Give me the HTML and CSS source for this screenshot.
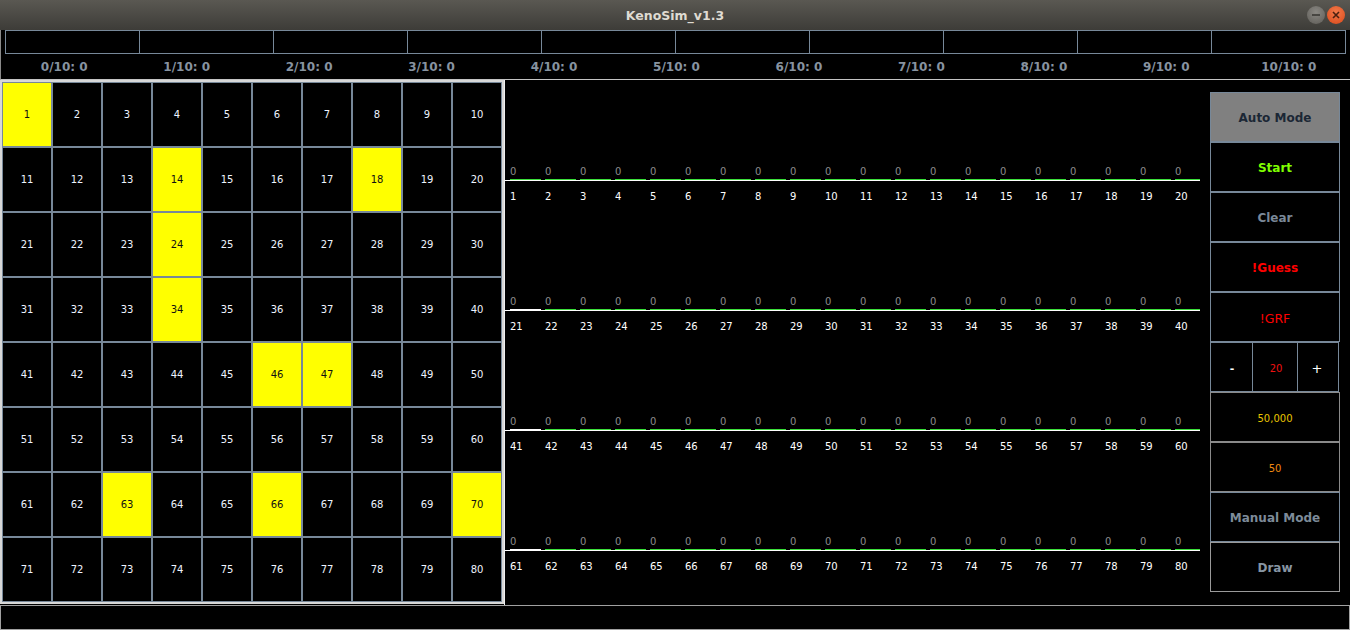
FILE: index.html
```html
<!DOCTYPE html>
<html lang="en">
<head>
<meta charset="utf-8">
<title>KenoSim_v1.3</title>
<link rel="stylesheet" href="styles.css">
</head>
<body>
<div class="window">
  <header class="titlebar">
    <div></div>
    <div class="title">KenoSim_v1.3</div>
    <div class="winbtns">
      <span class="wb wb-min"><svg width="18" height="18" viewBox="0 0 18 18"><line x1="5" y1="9" x2="13" y2="9" stroke="#3a3935" stroke-width="1.6"/></svg></span>
      <span class="wb wb-close"><svg width="18" height="18" viewBox="0 0 18 18"><path d="M6 6 L12 12 M12 6 L6 12" stroke="#4a2010" stroke-width="1.6"/></svg></span>
    </div>
  </header>

  <section class="top">
    <div class="boxes">
      <div class="box"></div><div class="box"></div><div class="box"></div><div class="box"></div><div class="box"></div>
      <div class="box"></div><div class="box"></div><div class="box"></div><div class="box"></div><div class="box"></div>
    </div>
    <div class="labels">
      <span>0/10: 0</span><span>1/10: 0</span><span>2/10: 0</span><span>3/10: 0</span><span>4/10: 0</span><span>5/10: 0</span>
      <span>6/10: 0</span><span>7/10: 0</span><span>8/10: 0</span><span>9/10: 0</span><span>10/10: 0</span>
    </div>
  </section>

  <main class="main">
    <div class="board">
      <div class="cell on">1</div><div class="cell">2</div><div class="cell">3</div><div class="cell">4</div><div class="cell">5</div><div class="cell">6</div><div class="cell">7</div><div class="cell">8</div><div class="cell">9</div><div class="cell">10</div>
      <div class="cell">11</div><div class="cell">12</div><div class="cell">13</div><div class="cell on">14</div><div class="cell">15</div><div class="cell">16</div><div class="cell">17</div><div class="cell on">18</div><div class="cell">19</div><div class="cell">20</div>
      <div class="cell">21</div><div class="cell">22</div><div class="cell">23</div><div class="cell on">24</div><div class="cell">25</div><div class="cell">26</div><div class="cell">27</div><div class="cell">28</div><div class="cell">29</div><div class="cell">30</div>
      <div class="cell">31</div><div class="cell">32</div><div class="cell">33</div><div class="cell on">34</div><div class="cell">35</div><div class="cell">36</div><div class="cell">37</div><div class="cell">38</div><div class="cell">39</div><div class="cell">40</div>
      <div class="cell">41</div><div class="cell">42</div><div class="cell">43</div><div class="cell">44</div><div class="cell">45</div><div class="cell on">46</div><div class="cell on">47</div><div class="cell">48</div><div class="cell">49</div><div class="cell">50</div>
      <div class="cell">51</div><div class="cell">52</div><div class="cell">53</div><div class="cell">54</div><div class="cell">55</div><div class="cell">56</div><div class="cell">57</div><div class="cell">58</div><div class="cell">59</div><div class="cell">60</div>
      <div class="cell">61</div><div class="cell">62</div><div class="cell on">63</div><div class="cell">64</div><div class="cell">65</div><div class="cell on">66</div><div class="cell">67</div><div class="cell">68</div><div class="cell">69</div><div class="cell on">70</div>
      <div class="cell">71</div><div class="cell">72</div><div class="cell">73</div><div class="cell">74</div><div class="cell">75</div><div class="cell">76</div><div class="cell">77</div><div class="cell">78</div><div class="cell">79</div><div class="cell">80</div>
    </div>

    <div class="hist">
      <div class="hrow r1">
        <div class="hplot">
          <div class="hcol"><span class="hval">0</span><span class="bar"></span></div><div class="hcol"><span class="hval">0</span><span class="bar"></span></div><div class="hcol"><span class="hval">0</span><span class="bar"></span></div><div class="hcol"><span class="hval">0</span><span class="bar"></span></div><div class="hcol"><span class="hval">0</span><span class="bar"></span></div>
          <div class="hcol"><span class="hval">0</span><span class="bar"></span></div><div class="hcol"><span class="hval">0</span><span class="bar"></span></div><div class="hcol"><span class="hval">0</span><span class="bar"></span></div><div class="hcol"><span class="hval">0</span><span class="bar"></span></div><div class="hcol"><span class="hval">0</span><span class="bar"></span></div>
          <div class="hcol"><span class="hval">0</span><span class="bar"></span></div><div class="hcol"><span class="hval">0</span><span class="bar"></span></div><div class="hcol"><span class="hval">0</span><span class="bar"></span></div><div class="hcol"><span class="hval">0</span><span class="bar"></span></div><div class="hcol"><span class="hval">0</span><span class="bar"></span></div>
          <div class="hcol"><span class="hval">0</span><span class="bar"></span></div><div class="hcol"><span class="hval">0</span><span class="bar"></span></div><div class="hcol"><span class="hval">0</span><span class="bar"></span></div><div class="hcol"><span class="hval">0</span><span class="bar"></span></div><div class="hcol"><span class="hval">0</span><span class="bar"></span></div>
        </div>
        <div class="hnums"><span>1</span><span>2</span><span>3</span><span>4</span><span>5</span><span>6</span><span>7</span><span>8</span><span>9</span><span>10</span><span>11</span><span>12</span><span>13</span><span>14</span><span>15</span><span>16</span><span>17</span><span>18</span><span>19</span><span>20</span></div>
      </div>
      <div class="hrow r2">
        <div class="hplot">
          <div class="hcol"><span class="hval">0</span><span class="bar white"></span></div><div class="hcol"><span class="hval">0</span><span class="bar"></span></div><div class="hcol"><span class="hval">0</span><span class="bar"></span></div><div class="hcol"><span class="hval">0</span><span class="bar"></span></div><div class="hcol"><span class="hval">0</span><span class="bar"></span></div>
          <div class="hcol"><span class="hval">0</span><span class="bar"></span></div><div class="hcol"><span class="hval">0</span><span class="bar"></span></div><div class="hcol"><span class="hval">0</span><span class="bar"></span></div><div class="hcol"><span class="hval">0</span><span class="bar"></span></div><div class="hcol"><span class="hval">0</span><span class="bar"></span></div>
          <div class="hcol"><span class="hval">0</span><span class="bar"></span></div><div class="hcol"><span class="hval">0</span><span class="bar"></span></div><div class="hcol"><span class="hval">0</span><span class="bar"></span></div><div class="hcol"><span class="hval">0</span><span class="bar"></span></div><div class="hcol"><span class="hval">0</span><span class="bar"></span></div>
          <div class="hcol"><span class="hval">0</span><span class="bar"></span></div><div class="hcol"><span class="hval">0</span><span class="bar"></span></div><div class="hcol"><span class="hval">0</span><span class="bar"></span></div><div class="hcol"><span class="hval">0</span><span class="bar"></span></div><div class="hcol"><span class="hval">0</span><span class="bar"></span></div>
        </div>
        <div class="hnums"><span>21</span><span>22</span><span>23</span><span>24</span><span>25</span><span>26</span><span>27</span><span>28</span><span>29</span><span>30</span><span>31</span><span>32</span><span>33</span><span>34</span><span>35</span><span>36</span><span>37</span><span>38</span><span>39</span><span>40</span></div>
      </div>
      <div class="hrow r3">
        <div class="hplot">
          <div class="hcol"><span class="hval">0</span><span class="bar white"></span></div><div class="hcol"><span class="hval">0</span><span class="bar"></span></div><div class="hcol"><span class="hval">0</span><span class="bar"></span></div><div class="hcol"><span class="hval">0</span><span class="bar"></span></div><div class="hcol"><span class="hval">0</span><span class="bar"></span></div>
          <div class="hcol"><span class="hval">0</span><span class="bar"></span></div><div class="hcol"><span class="hval">0</span><span class="bar"></span></div><div class="hcol"><span class="hval">0</span><span class="bar"></span></div><div class="hcol"><span class="hval">0</span><span class="bar"></span></div><div class="hcol"><span class="hval">0</span><span class="bar"></span></div>
          <div class="hcol"><span class="hval">0</span><span class="bar"></span></div><div class="hcol"><span class="hval">0</span><span class="bar"></span></div><div class="hcol"><span class="hval">0</span><span class="bar"></span></div><div class="hcol"><span class="hval">0</span><span class="bar"></span></div><div class="hcol"><span class="hval">0</span><span class="bar"></span></div>
          <div class="hcol"><span class="hval">0</span><span class="bar"></span></div><div class="hcol"><span class="hval">0</span><span class="bar"></span></div><div class="hcol"><span class="hval">0</span><span class="bar"></span></div><div class="hcol"><span class="hval">0</span><span class="bar"></span></div><div class="hcol"><span class="hval">0</span><span class="bar"></span></div>
        </div>
        <div class="hnums"><span>41</span><span>42</span><span>43</span><span>44</span><span>45</span><span>46</span><span>47</span><span>48</span><span>49</span><span>50</span><span>51</span><span>52</span><span>53</span><span>54</span><span>55</span><span>56</span><span>57</span><span>58</span><span>59</span><span>60</span></div>
      </div>
      <div class="hrow r4">
        <div class="hplot">
          <div class="hcol"><span class="hval">0</span><span class="bar white"></span></div><div class="hcol"><span class="hval">0</span><span class="bar"></span></div><div class="hcol"><span class="hval">0</span><span class="bar"></span></div><div class="hcol"><span class="hval">0</span><span class="bar"></span></div><div class="hcol"><span class="hval">0</span><span class="bar"></span></div>
          <div class="hcol"><span class="hval">0</span><span class="bar"></span></div><div class="hcol"><span class="hval">0</span><span class="bar"></span></div><div class="hcol"><span class="hval">0</span><span class="bar"></span></div><div class="hcol"><span class="hval">0</span><span class="bar"></span></div><div class="hcol"><span class="hval">0</span><span class="bar"></span></div>
          <div class="hcol"><span class="hval">0</span><span class="bar"></span></div><div class="hcol"><span class="hval">0</span><span class="bar"></span></div><div class="hcol"><span class="hval">0</span><span class="bar"></span></div><div class="hcol"><span class="hval">0</span><span class="bar"></span></div><div class="hcol"><span class="hval">0</span><span class="bar"></span></div>
          <div class="hcol"><span class="hval">0</span><span class="bar"></span></div><div class="hcol"><span class="hval">0</span><span class="bar"></span></div><div class="hcol"><span class="hval">0</span><span class="bar"></span></div><div class="hcol"><span class="hval">0</span><span class="bar"></span></div><div class="hcol"><span class="hval">0</span><span class="bar"></span></div>
        </div>
        <div class="hnums"><span>61</span><span>62</span><span>63</span><span>64</span><span>65</span><span>66</span><span>67</span><span>68</span><span>69</span><span>70</span><span>71</span><span>72</span><span>73</span><span>74</span><span>75</span><span>76</span><span>77</span><span>78</span><span>79</span><span>80</span></div>
      </div>
    </div>

    <div class="controls">
      <div class="btn auto">Auto Mode</div>
      <div class="btn start">Start</div>
      <div class="btn clear">Clear</div>
      <div class="btn red">!Guess</div>
      <div class="btn red grf">!GRF</div>
      <div class="stepper">
        <div class="step minus">-</div>
        <div class="step val">20</div>
        <div class="step plus">+</div>
      </div>
      <div class="btn small gold">50,000</div>
      <div class="btn small orange">50</div>
      <div class="btn manual">Manual Mode</div>
      <div class="btn draw">Draw</div>
    </div>
  </main>

  <footer class="status"></footer>
</div>
</body>
</html>
```

FILE: styles.css
```css
* { box-sizing: border-box; margin: 0; padding: 0; }
html, body { width: 1350px; height: 630px; overflow: hidden; background: #000; }
body { font-family: "DejaVu Sans", "Liberation Sans", sans-serif; }

.window { width: 1350px; height: 630px; display: flex; flex-direction: column; background: #000; }

/* title bar */
.titlebar {
  height: 30px; flex: none;
  display: grid; grid-template-columns: 1fr auto 1fr; align-items: center;
  background: linear-gradient(#5a5852, #3d3c38);
}
.title { color: #dfdbd2; font-weight: bold; font-size: 12.5px; }
.winbtns { justify-self: end; display: flex; gap: 2px; padding-right: 5px; }
.wb { width: 18px; height: 18px; border-radius: 50%; display: block; }
.wb svg { display: block; }
.wb-min { background: radial-gradient(circle at 50% 35%, #8a8883, #5e5c57); }
.wb-close { background: radial-gradient(circle at 50% 35%, #f27a4a, #d9481a); }

/* top counters */
.top { height: 50px; flex: none; border-left: 1px solid #8a8a8a; border-bottom: 1px solid #c4c4c4; }
.boxes {
  display: grid; grid-template-columns: repeat(10, 134px);
  width: 1341px; height: 24px; margin-left: 4px;
  border-right: 1px solid #778899;
}
.box { border: 1px solid #778899; border-right: none; }
.labels { display: grid; grid-template-columns: repeat(11, 1fr); height: 25px; align-items: center; padding-left: 2px; }
.labels span { text-align: center; font-weight: bold; font-size: 12px; color: #8793a0; }

/* main */
.main { height: 525px; flex: none; display: flex; }

.board {
  flex: none; width: 504px; height: 524px;
  border: 2px solid #d8d8d8;
  display: grid; grid-template-columns: repeat(10, 50px); grid-template-rows: repeat(8, 65px);
}
.cell {
  border: 1px solid #778899;
  display: flex; align-items: center; justify-content: center;
  font-size: 10px; color: #eef4ff;
}
.cell.on { background: #ffff00; color: #111; }

/* histogram */
.hist { flex: none; width: 701px; border-left: 1px solid #f0f0f0; padding-top: 86px; }
.hrow { width: 695px; }
.r2 { margin-top: 93px; }
.r3, .r4 { margin-top: 83px; }
.hplot {
  width: 695px; height: 15px; overflow: hidden;
  display: grid; grid-template-columns: repeat(20, 35px); padding-left: 5px;
  border-bottom: 1px solid #ffffff;
}
.hcol { display: flex; flex-direction: column; }
.hval { font-size: 10px; line-height: 12px; height: 12px; color: #8c8c8c; margin-bottom: 1px; }
.bar { width: 31px; height: 1px; background: #3ae03a; }
.bar.white { background: #ffffff; }
.hnums {
  display: grid; grid-template-columns: repeat(20, 35px); padding-left: 5px;
  margin-top: 10px; height: 12px; width: 705px;
}
.hnums span { font-size: 10px; line-height: 12px; color: #ffffff; }

/* controls */
.controls { flex: none; width: 145px; padding: 12px 0 0 5px; }
.btn {
  width: 130px; height: 50px; padding-top: 2px;
  border: 1px solid #778899;
  display: flex; align-items: center; justify-content: center;
  font-weight: bold; font-size: 12px;
}
.auto { background: #808080; color: #1b2735; }
.start { color: #7fff00; }
.clear { color: #7a8898; }
.red { color: #ff0000; }
.grf { font-weight: normal; font-size: 12.5px; }
.small { font-weight: normal; font-size: 10px; }
.gold { color: #e8c400; border-color: #8a8a8a; }
.orange { color: #f08a10; border-color: #8a8a8a; }
.manual { color: #7d8b99; }
.draw { color: #8795a3; border-color: #9a9a9a; }

.stepper { display: flex; height: 50px; width: 129px; }
.step {
  border: 1px solid #778899; padding-top: 2px;
  display: flex; align-items: center; justify-content: center;
  font-size: 11px; color: #ffffff;
}
.minus { width: 43px; font-weight: bold; padding-left: 1px; }
.val { width: 44px; color: #ee1111; border-left: none; border-right: none; font-size: 10px; padding-left: 2px; }
.plus { width: 42px; font-size: 13px; padding-right: 2px; }

/* status bar */
.status { height: 25px; flex: none; width: 1350px; border: 1px solid #a0a0a0; }
```
